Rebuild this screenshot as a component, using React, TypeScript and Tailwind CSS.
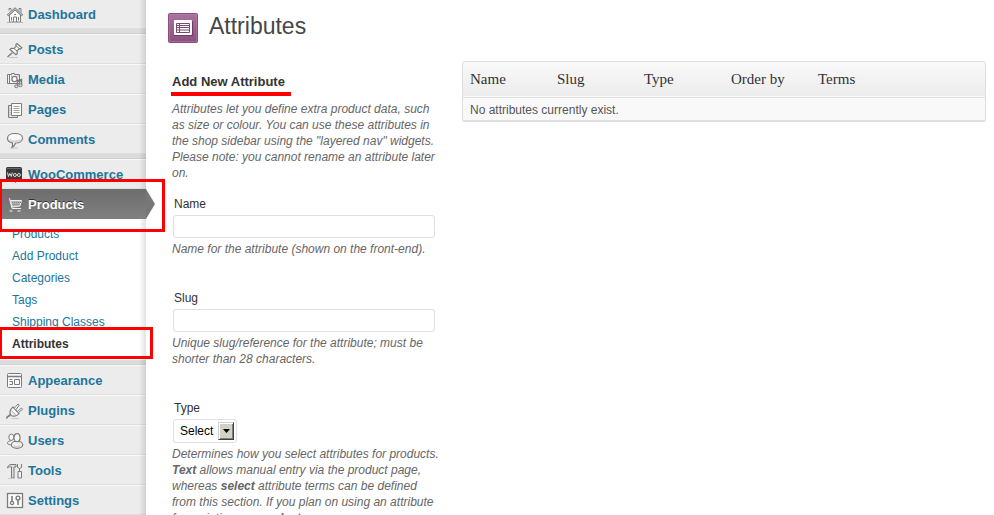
import type { ReactNode } from "react";

const iconClass = "h-[18px] w-[18px] shrink-0 fill-none stroke-[#7c7c7c]";

function HomeIcon() {
  return (
    <svg viewBox="0 0 18 18" className={iconClass} aria-hidden="true">
      <path d="M3.500 9v7h11V9L9 4z" fill="#f8f8f8" />
      <path d="M3 4.500v-2h2v2M13 4.500v-2h2v4" />
      <path d="M1.500 9.500 9 2.500l7.500 7" strokeWidth="2" />
      <path d="M1.800 9.300 9 2.800l7.200 6.500" stroke="#f2f2f2" strokeWidth=".7" />
      <path d="M7.500 16v-5h3v5M5.500 11v3.500M12.500 11v3.500M8 8.500h2" />
      <path d="M1 16.500h16" stroke="#b5b5b5" />
    </svg>
  );
}

function PinIcon() {
  return (
    <svg viewBox="0 0 18 18" className={iconClass} aria-hidden="true">
      <path d="M3 16.500h9" stroke="#c8c8c8" />
      <path d="M1.500 16 6.500 11.500" strokeWidth="1.400" />
      <path d="m11 2.500 4.800 4.200-1.300 1.300-1.200-.3L11 10l.3 2.500-1.300 1.300L4 8.500l1.300-1.200 2.700.2 2.300-2.300-.5-1.500z" fill="#f8f8f8" strokeWidth="1.200" />
      <path d="m8 7.500 3 2.500M10.500 5.200l2.800 2.500" />
    </svg>
  );
}

function MediaIcon() {
  return (
    <svg viewBox="0 0 18 18" className={iconClass} aria-hidden="true">
      <path d="M1.500 3.500h4v-1h3v1h5v9h-12z" fill="#f4f4f4" />
      <circle cx="8.500" cy="8" r="2.600" fill="#fff" strokeWidth="1.200" />
      <path d="M3.500 4v8M5 5h1M11.500 5h1" />
      <path d="M11.500 15.500V9.500l4-1v5.500M11.500 10.500l4-1" strokeWidth="1.400" />
      <ellipse cx="10.300" cy="15.300" rx="1.700" ry="1.400" fill="#ddd" />
      <ellipse cx="14.400" cy="14.300" rx="1.700" ry="1.400" fill="#ddd" />
    </svg>
  );
}

function PagesIcon() {
  return (
    <svg viewBox="0 0 18 18" className={iconClass} aria-hidden="true">
      <path d="M5.500 4.500h-3v12h9v-2" fill="#e4e4e4" />
      <path d="M5.500 2.500h10v12h-10z" fill="#fafafa" />
      <path d="M7.500 5.500h6M7.500 7.500h6M7.500 9.500h6M7.500 11.500h6M3.500 7.500h1M3.500 9.500h1M3.500 11.500h1M3.500 13.500h1" stroke="#a5a5a5" />
    </svg>
  );
}

function CommentIcon() {
  return (
    <svg viewBox="0 0 18 18" className={iconClass} aria-hidden="true">
      <path d="M6 17h6" stroke="#c8c8c8" />
      <path d="M9 2.500c4.200 0 7.500 1.800 7.500 4.700S13.500 12 9.500 12c-.5 2-1.500 3.500-3.500 4.500.7-1.500.8-3 .5-4.700C3.500 11.300 1.500 9.700 1.500 7.200 1.500 4.300 4.800 2.500 9 2.500z" fill="#fafafa" strokeWidth="1.200" />
      <path d="M3.500 8.500c1.500 2.500 9.500 2.500 11 0" stroke="#d5d5d5" strokeWidth="2" />
    </svg>
  );
}

function WooIcon() {
  return (
    <svg viewBox="0 0 18 18" className="h-[18px] w-[18px] shrink-0" aria-hidden="true">
      <path d="M1.500 1h13a1.500 1.500 0 0 1 1.500 1.500V14h-6v3l-3-3H0V2.500A1.500 1.500 0 0 1 1.500 1z" fill="#3a3a3a" />
      <path d="M1 2.500h14" stroke="#666" />
      <path d="m1.500 6.500 1 4 1.400-3 1.400 3 1-4" fill="none" stroke="#ddd" />
      <circle cx="8.900" cy="9" r="1.500" fill="none" stroke="#ddd" />
      <circle cx="12.900" cy="9" r="1.500" fill="none" stroke="#ddd" />
    </svg>
  );
}

function CartIcon() {
  return (
    <svg viewBox="0 0 18 18" className="h-[18px] w-[18px] shrink-0" aria-hidden="true">
      <path d="M1 2.500h2.500l2.500 10h9" fill="none" stroke="#eee" />
      <path d="M4.500 4.500h11l-1.500 5.500-8 1z" fill="#b5b5b5" stroke="#eee" />
      <path d="M6 6.500h9M6.500 8.500h8" stroke="#777" strokeDasharray="1 1" />
      <circle cx="1.500" cy="2.500" r="1.500" fill="#b5489a" />
      <path d="M3.500 15h3M11.500 15h3" stroke="#ccc" strokeWidth="1.500" />
    </svg>
  );
}

function AppearanceIcon() {
  return (
    <svg viewBox="0 0 18 18" className={iconClass} aria-hidden="true">
      <rect x="1.500" y="1.500" width="14" height="14" rx="1" fill="#fafafa" />
      <path d="M2 4.500h13" strokeWidth="1.500" />
      <path d="M8.500 7.500h5v5h-5zM3.500 7.500h3M3.500 9.500h3M3.500 12.500h3M6.500 9.500v3" />
    </svg>
  );
}

function PluginIcon() {
  return (
    <svg viewBox="0 0 18 18" className={iconClass} aria-hidden="true">
      <path d="M.5 16.500c.5-3 3-1.500 3.500-4" strokeWidth="1.800" />
      <path d="m7 5 6 6.500c-2 2.500-5.500 3.500-8 2C3 11 4 7 7 5z" fill="#f6f6f6" strokeWidth="1.200" />
      <path d="m8.500 6 3.500-4 1.300 1-3.300 4.500M11.500 9.500l4-3.500 1 1.300-4 3.200" fill="#fff" />
      <path d="m5.500 8.500 4 4.500" stroke="#aaa" />
      <path d="M6 16.500h7" stroke="#ccc" />
    </svg>
  );
}

function UsersIcon() {
  return (
    <svg viewBox="0 0 18 18" className={iconClass} aria-hidden="true">
      <path d="M6 8.500c-3 .3-4.500 1.200-4.500 2.500s2 2 5 2" fill="#f2f2f2" />
      <ellipse cx="5.300" cy="5.200" rx="2.500" ry="3.200" fill="#f8f8f8" />
      <ellipse cx="11" cy="12.700" rx="5.700" ry="3.600" fill="#f2f2f2" strokeWidth="1.200" />
      <ellipse cx="11" cy="5.700" rx="3" ry="4" fill="#fafafa" strokeWidth="1.200" />
      <path d="M7.500 13.500c2 1.500 5 1.500 7 0" stroke="#ccc" strokeWidth="1.500" />
    </svg>
  );
}

function ToolsIcon() {
  return (
    <svg viewBox="0 0 18 18" className={iconClass} aria-hidden="true">
      <path d="M1.500 6c.5-2 1.500-3.500 3.500-3.500h5v2.500H8v11H5.500V5C4 4.500 2.500 5 1.500 6z" fill="#dcdcdc" />
      <path d="M11.500 2v3.500l2 1v3M15.500 2v3.500l-2 1" />
      <path d="M12 9.500h3.500v6.500H12z" fill="#f2f2f2" />
      <path d="M2 16.500h7" stroke="#c8c8c8" />
    </svg>
  );
}

function SettingsIcon() {
  return (
    <svg viewBox="0 0 18 18" className={iconClass} aria-hidden="true">
      <rect x="1.500" y="1.500" width="15" height="14" fill="#fafafa" strokeWidth="1.300" />
      <path d="M6 4v5" strokeWidth="1.600" />
      <circle cx="6" cy="11" r="1.600" strokeWidth="1.300" />
      <circle cx="12" cy="6" r="1.900" strokeWidth="1.400" />
      <path d="M12 8v5" strokeWidth="1.600" />
    </svg>
  );
}

function AttributesIcon() {
  return (
    <svg viewBox="0 0 30 30" className="h-[30px] w-[30px] shrink-0" aria-hidden="true">
      <defs>
        <linearGradient id="plum" x1="0" y1="0" x2="0" y2="1">
          <stop offset="0" stopColor="#a9729d" />
          <stop offset="1" stopColor="#8c4f80" />
        </linearGradient>
      </defs>
      <rect x=".5" y=".5" width="29" height="29" rx="1" fill="url(#plum)" stroke="#8d4b80" />
      <rect x="1.500" y="1.500" width="27" height="27" fill="none" stroke="#b583aa" strokeOpacity=".5" />
      <rect x="6" y="8" width="19" height="15" rx="1" fill="#6d3c63" />
      <rect x="6" y="7" width="18" height="15" rx="1" fill="#fff" />
      <path d="M8.500 10.500h13v9h-13zM8 12.500h14M8 14.500h14M8 17h14M11.500 10v9" fill="none" stroke="#7b4a71" />
    </svg>
  );
}

function MenuItem({ icon, children }: { icon: ReactNode; children: ReactNode }) {
  return (
    <a
      href="#"
      className="flex h-[30px] items-center gap-1 border-t border-b border-t-[#f9f9f9] border-b-[#dfdfdf] bg-[#ececec] pt-[2px] pl-[6px] text-[13px] font-bold text-[#21759b]"
    >
      {icon}
      {children}
    </a>
  );
}

function Separator() {
  return <div className="h-[5px] border-b border-[#cfcfcf] bg-[#dcdcdc]" />;
}

function SubItem({ children }: { children: ReactNode }) {
  return (
    <a href="#" className="block h-[22px] pl-3 text-[12px] leading-[22px] text-[#21759b]">
      {children}
    </a>
  );
}

function Sidebar() {
  return (
    <nav className="relative w-[146px] shrink-0 bg-[#ececec]">
      <div className="-mt-px">
        <MenuItem icon={<HomeIcon />}>Dashboard</MenuItem>
      </div>
      <Separator />
      <MenuItem icon={<PinIcon />}>Posts</MenuItem>
      <MenuItem icon={<MediaIcon />}>Media</MenuItem>
      <MenuItem icon={<PagesIcon />}>Pages</MenuItem>
      <MenuItem icon={<CommentIcon />}>Comments</MenuItem>
      <Separator />
      <MenuItem icon={<WooIcon />}>WooCommerce</MenuItem>
      <div className="relative z-10">
        <a
          href="#"
          className="flex h-[30px] items-center gap-1 bg-linear-to-b from-[#6d6d6d] to-[#808080] pt-[2px] pl-[6px] text-[13px] font-bold text-white [text-shadow:0_-1px_0_#333]"
        >
          <CartIcon />
          Products
        </a>
        <svg viewBox="0 0 9 30" className="absolute top-0 left-full h-[30px] w-[9px]" aria-hidden="true">
          <path d="M0 0 9 15 0 30z" fill="#777" />
        </svg>
        <div className="pointer-events-none absolute -top-[10px] -left-px h-[53px] w-[166px] border-[3px] border-[#f00]" />
      </div>
      <div className="bg-white pt-1 pb-[5px]">
        <SubItem>Products</SubItem>
        <SubItem>Add Product</SubItem>
        <SubItem>Categories</SubItem>
        <SubItem>Tags</SubItem>
        <SubItem>Shipping Classes</SubItem>
        <div className="relative z-10">
          <a href="#" aria-current="page" className="block h-[22px] pl-3 text-[12px] leading-[22px] font-bold text-[#333]">
            Attributes
          </a>
          <div className="pointer-events-none absolute -top-[6px] -left-px h-[32px] w-[154px] border-[3px] border-[#f00]" />
        </div>
      </div>
      <Separator />
      <MenuItem icon={<AppearanceIcon />}>Appearance</MenuItem>
      <MenuItem icon={<PluginIcon />}>Plugins</MenuItem>
      <MenuItem icon={<UsersIcon />}>Users</MenuItem>
      <MenuItem icon={<ToolsIcon />}>Tools</MenuItem>
      <MenuItem icon={<SettingsIcon />}>Settings</MenuItem>
      <div className="pointer-events-none absolute inset-y-0 right-0 w-[7px] border-r border-black/10 bg-linear-to-r from-black/0 to-black/10" />
    </nav>
  );
}

function Hint({ children }: { children: ReactNode }) {
  return <p className="mt-[3px] text-[12px] leading-4 text-[#666] italic">{children}</p>;
}

function TextField({ id, label, hint }: { id: string; label: string; hint: ReactNode }) {
  return (
    <div>
      <label htmlFor={id} className="block pl-[2px] text-[12px] leading-4">
        {label}
      </label>
      <input
        id={id}
        type="text"
        className="mt-[3px] ml-px block h-[23px] w-[262px] rounded-[3px] border border-[#dfdfdf] bg-white px-1 text-[12px]"
      />
      <Hint>{hint}</Hint>
    </div>
  );
}

function AttributeForm() {
  return (
    <form className="w-[274px] shrink-0">
      <h2 className="-ml-px w-[120px] border-b-4 border-[#f00] pt-[3px] pb-px pl-px text-[13px] leading-[18px] font-bold whitespace-nowrap text-[#333]">
        Add New Attribute
      </h2>
      <p className="mt-[5px] text-[12px] leading-4 text-[#666] italic">
        Attributes let you define extra product data, such
        <br />
        as size or colour. You can use these attributes in
        <br />
        the shop sidebar using the "layered nav" widgets.
        <br />
        Please note: you cannot rename an attribute later
        <br />
        on.
      </p>
      <div className="mt-[15px] flex flex-col gap-[33px]">
        <TextField id="name" label="Name" hint="Name for the attribute (shown on the front-end)." />
        <TextField
          id="slug"
          label="Slug"
          hint={
            <>
              Unique slug/reference for the attribute; must be
              <br />
              shorter than 28 characters.
            </>
          }
        />
        <div>
          <label htmlFor="type" className="block pl-[2px] text-[12px] leading-4">
            Type
          </label>
          <div className="relative mt-[3px] ml-px w-[64px]">
            <select
              id="type"
              className="block h-6 w-full appearance-none rounded-[3px] border border-[#dfdfdf] bg-white pl-[6px] text-[12px] text-black"
            >
              <option>Select</option>
              <option>Text</option>
            </select>
            <span className="pointer-events-none absolute top-[3px] right-[3px] flex h-[18px] w-4 items-center justify-center border border-t-[#d4d0c8] border-r-[#404040] border-b-[#404040] border-l-[#d4d0c8] bg-[#d4d0c8] shadow-[inset_1px_1px_0_#fff,inset_-1px_-1px_0_#808080]">
              <svg viewBox="0 0 7 4" className="h-1 w-[7px]" aria-hidden="true">
                <path d="M0 0h7L3.500 4z" fill="#000" />
              </svg>
            </span>
          </div>
          <Hint>
            Determines how you select attributes for products.
            <br />
            <strong>Text</strong> allows manual entry via the product page,
            <br />
            whereas <strong>select</strong> attribute terms can be defined
            <br />
            from this section. If you plan on using an attribute
            <br />
            for variations use <strong>select</strong>.
          </Hint>
        </div>
      </div>
    </form>
  );
}

function AttributeTable() {
  const heading = "px-[7px] text-left font-normal";
  return (
    <div className="min-w-0 flex-1 self-start overflow-hidden rounded-[3px] border border-b-2 border-[#dfdfdf] bg-[#f9f9f9]">
      <table className="w-full table-fixed border-collapse">
        <thead className="h-[35px] border-b border-[#dfdfdf] bg-linear-to-b from-[#f9f9f9] to-[#ececec] font-['Liberation_Serif',serif] text-[15px] text-[#333]">
          <tr>
            <th scope="col" className={heading}>Name</th>
            <th scope="col" className={heading}>Slug</th>
            <th scope="col" className={heading}>Type</th>
            <th scope="col" className={heading}>Order by</th>
            <th scope="col" colSpan={2} className={heading}>Terms</th>
          </tr>
        </thead>
        <tbody>
          <tr className="h-[23px] text-[12px] text-[#555]">
            <td colSpan={6} className="px-[7px] pt-[2px]">No attributes currently exist.</td>
          </tr>
        </tbody>
      </table>
    </div>
  );
}

export default function App() {
  return (
    <div className="flex h-screen overflow-hidden bg-white font-['Liberation_Sans',Arial,sans-serif] text-[#333]">
      <Sidebar />
      <main className="min-w-0 flex-1 pt-[13px] pr-2 pl-[22px]">
        <header className="flex h-[30px] gap-[11px]">
          <AttributesIcon />
          <h1 className="text-[23px] leading-[26px] text-[#464646]">Attributes</h1>
        </header>
        <div className="mt-[18px] flex gap-4 pl-1">
          <div className="pt-[9px]">
            <AttributeForm />
          </div>
          <AttributeTable />
        </div>
      </main>
    </div>
  );
}
